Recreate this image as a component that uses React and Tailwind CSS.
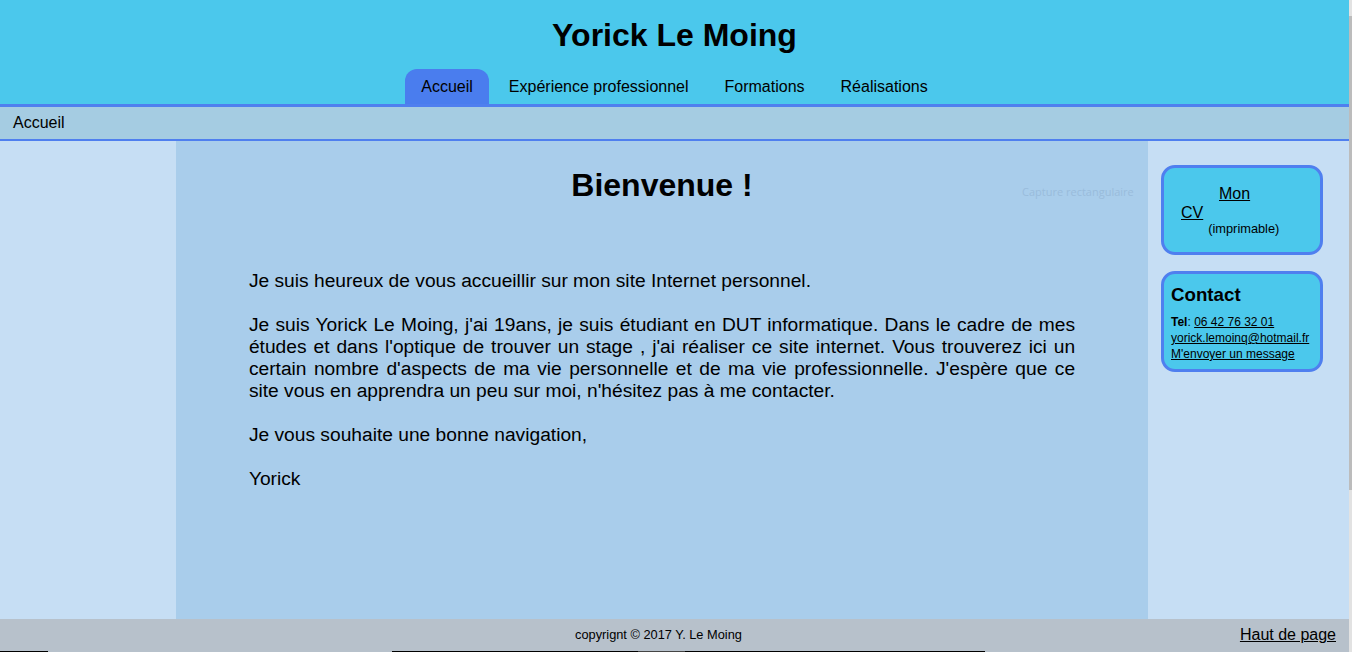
import React from 'react';

const navItems = ['Accueil', 'Expérience professionnel', 'Formations', 'Réalisations'];

const App = () => {
  return (
    <div className="flex h-[652px] w-full overflow-hidden font-['Liberation_Sans',Arial,sans-serif] text-black">
      <div className="flex min-w-0 flex-1 flex-col">
        {/* Header */}
        <header className="flex h-[107px] flex-col items-center border-b-[3px] border-[#4f7fef] bg-[#4bc8ec]">
          <h1 className="pt-[17px] text-[32px] font-bold leading-[37px]">Yorick Le Moing</h1>
          <ul className="mt-[15px] flex gap-[4px]">
            {navItems.map((item, i) => (
              <li
                key={item}
                className={
                  i === 0
                    ? 'h-[35px] rounded-t-[12px] bg-[#4a7dee] px-4 text-[16px] leading-[35px]'
                    : 'h-[35px] px-4 text-[16px] leading-[35px]'
                }
              >
                {item}
              </li>
            ))}
          </ul>
        </header>

        {/* Breadcrumb */}
        <div className="h-[34px] border-b-2 border-[#4f7fef] bg-[#a5cce2] pl-[13px] text-[16px] leading-[32px]">
          Accueil
        </div>

        {/* Main */}
        <main className="flex flex-1">
          <div className="w-[176px] bg-[#c6def4]"></div>

          <section className="relative w-[972px] bg-[#a9cdeb] pt-[26px]">
            <h2 className="text-center text-[32px] font-bold leading-[37px]">Bienvenue !</h2>
            <span className="absolute left-[846px] top-[43px] font-['Open_Sans',sans-serif] text-[11px] text-[#99bcdb]">
              Capture rectangulaire
            </span>
            <div className="mx-auto mt-[66px] w-[85%] text-justify text-[19.2px] leading-[22px]">
              <p className="mb-[22px]">Je suis heureux de vous accueillir sur mon site Internet personnel.</p>
              <p className="mb-[22px]">
                Je suis Yorick Le Moing, j'ai 19ans, je suis étudiant en DUT informatique. Dans le cadre de mes
                études et dans l'optique de trouver un stage , j'ai réaliser ce site internet. Vous trouverez ici un
                certain nombre d'aspects de ma vie personnelle et de ma vie professionnelle. J'espère que ce site
                vous en apprendra un peu sur moi, n'hésitez pas à me contacter.
              </p>
              <p className="mb-[22px]">Je vous souhaite une bonne navigation,</p>
              <p>Yorick</p>
            </div>
          </section>

          <aside className="flex flex-1 flex-col gap-4 bg-[#c6def4] pl-[13px] pt-[24px]">
            <div className="w-[162px] rounded-[14px] border-[3px] border-[#4f7fef] bg-[#4bc8ec] pb-[16px] pl-[17px] pt-[16px]">
              <div className="pl-[38px] text-[16px] leading-[19px]">
                <a href="#" className="underline">Mon</a>
              </div>
              <div className="flex items-start">
                <a href="#" className="text-[16px] leading-[19px] underline">CV</a>
                <span className="ml-[5px] mt-[18px] text-[12.8px] leading-[15px]">(imprimable)</span>
              </div>
            </div>

            <div className="w-[162px] rounded-[14px] border-[3px] border-[#4f7fef] bg-[#4bc8ec] pb-[7px] pl-[7px] pt-[10px]">
              <h3 className="mb-[8px] text-[18.72px] font-bold leading-[22px]">Contact</h3>
              <div className="text-[12px] leading-[16px]">
                <p>
                  <span className="font-bold">Tel</span>: <a href="#" className="underline">06 42 76 32 01</a>
                </p>
                <p><a href="#" className="underline">yorick.lemoinq@hotmail.fr</a></p>
                <p><a href="#" className="underline">M'envoyer un message</a></p>
              </div>
            </div>
          </aside>
        </main>

        {/* Footer */}
        <footer className="flex h-[32px] items-center bg-[#b7c1cb]">
          <div className="ml-[77px] flex-1 text-center text-[12.8px]">copyrignt © 2017 Y. Le Moing</div>
          <a href="#" className="mr-[13px] text-[16px] underline">Haut de page</a>
        </footer>
        <div className="flex h-px bg-[#b7c1cb]">
          <div className="w-[48px] bg-black"></div>
          <div className="w-[344px]"></div>
          <div className="w-[246px] bg-black"></div>
          <div className="w-[47px] bg-[#444]"></div>
          <div className="w-[300px] bg-black"></div>
        </div>
      </div>

      {/* scrollbar */}
      <div className="flex w-[3px] flex-col bg-[#e2e2e2]">
        <div className="h-[16px]"></div>
        <div className="h-[474px] bg-[#bcbcbc]"></div>
      </div>
    </div>
  );
};

export default App;
